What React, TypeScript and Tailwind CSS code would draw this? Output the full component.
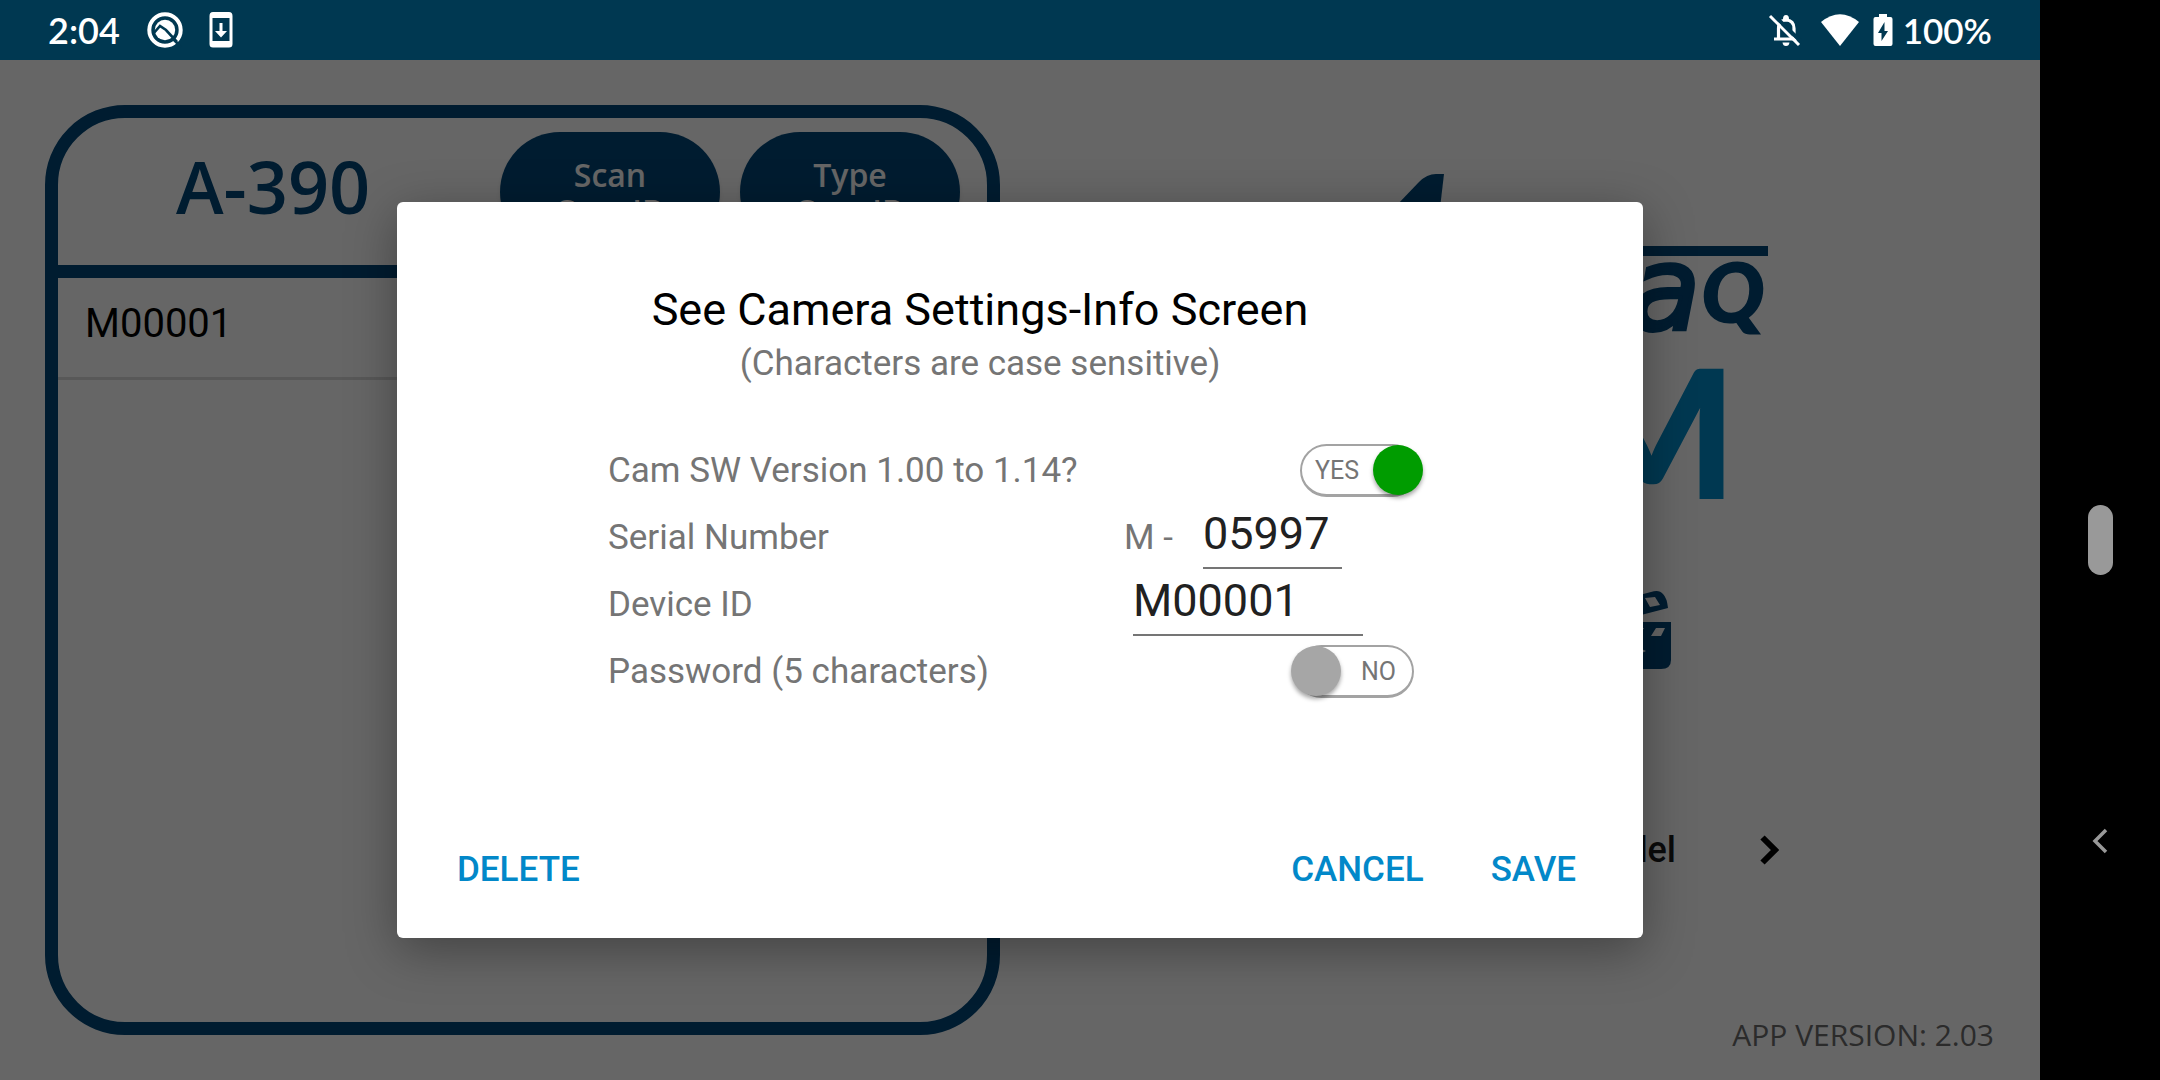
import React, { useState } from "react";

function StatusBar() {
  return (
    <header className="flex h-[60px] items-center justify-between bg-[#003851] pr-[48px] pl-[48px] text-white">
      <div className="flex items-center">
        <time className="w-[98px] font-['Lato'] text-[36px] leading-[44px] font-semibold">2:04</time>
        <svg className="h-[38px] w-[38px]" viewBox="0 0 38 38" aria-hidden="true">
          <circle cx="19" cy="19" r="15.7" fill="none" stroke="#fff" strokeWidth="4" />
          <circle cx="19" cy="19" r="10.2" fill="#fff" />
          <path d="M7 23l7-8 6 4 11 12" fill="none" stroke="#003851" strokeWidth="2.6" />
          <path d="M27 28l8 8" stroke="#003851" strokeWidth="2.5" />
        </svg>
        <svg className="ml-[25px] h-[36px] w-[24px]" viewBox="0 0 24 36" aria-hidden="true">
          <path fillRule="evenodd" fill="#fff" d="M4 0h16q3.500 0 3.500 4v28q0 3.500-3.500 3.500H4Q.5 35.500.5 32V4Q.5 0 4 0zM3.500 6v23h17V6z" />
          <path fill="#fff" d="M10.500 11h3v8h4.500l-6 6.500-6-6.500h4.500z" />
        </svg>
      </div>
      <div className="flex items-center">
        <svg className="h-[34px] w-[34px]" viewBox="0 0 34 34" aria-hidden="true">
          <path d="M10.500 26V15.500q0-8 7.500-8.500 8 .5 8 8.500V26" fill="none" stroke="#fff" strokeWidth="3.200" />
          <path d="M6 26h23" stroke="#fff" strokeWidth="3" />
          <path d="M15 6q0-4 3-4t3 4zM14.500 29.500h7q-.5 3.500-3.500 3.500t-3.500-3.500z" fill="#fff" />
          <path d="M4.500 1L34 29.500" stroke="#003851" strokeWidth="4" />
          <path d="M2 3L31 32" stroke="#fff" strokeWidth="3" />
        </svg>
        <svg className="ml-[19px] h-[32px] w-[38px]" viewBox="0 0 38 32" aria-hidden="true">
          <path fill="#fff" d="M0 8Q19-7.500 38 8L19 32z" />
        </svg>
        <svg className="ml-[14px] h-[32px] w-[20px]" viewBox="0 0 20 32" aria-hidden="true">
          <path fill="#fff" d="M6 0h8v3h3.500q2 0 2 2v25q0 2-2 2h-15q-2 0-2-2V5q0-2 2-2H6z" />
          <path fill="#003851" d="M11.500 8v9H15l-6.500 10v-8H5z" />
        </svg>
        <span className="ml-[10px] font-['Lato'] text-[35px] leading-[44px] font-semibold">100%</span>
      </div>
    </header>
  );
}

function PanelButton({ children }: { children: React.ReactNode }) {
  return (
    <button className="h-[120px] w-[220px] rounded-full bg-[#004678] pt-[2px] font-['Open_Sans'] text-[32px] leading-[36px] font-semibold text-white shadow-md">
      {children}
    </button>
  );
}

function CameraPanel() {
  return (
    <section className="flex flex-col overflow-hidden rounded-[80px] border-[13px] border-[#004678]">
      <div className="flex h-[147px] items-center pr-[27px]">
        <h1 className="flex-1 pb-[12px] pl-[118px] font-['Open_Sans'] text-[72px] leading-[80px] font-semibold text-[#004678]">A-390</h1>
        <div className="flex gap-5">
          <PanelButton>Scan<br />Cam ID</PanelButton>
          <PanelButton>Type<br />Cam ID</PanelButton>
        </div>
      </div>
      <ul className="border-t-[13px] border-[#004678]">
        <li className="flex h-[102px] items-center border-b-3 border-[#dddddd] pb-2 pl-[27px] text-[40px] leading-[48px] text-black">M00001</li>
      </ul>
    </section>
  );
}

function Brand() {
  return (
    <svg className="h-[326px] w-[496px]" viewBox="0 0 496 326" role="img" aria-label="Logo">
      <path d="M124 32L147 8Q155 0 164 0h8l-4 34z" fill="#004678" />
      <rect x="240" y="72" width="256" height="10" fill="#004678" />
      <text x="358" y="155" fontFamily="DejaVu Sans" fontStyle="oblique" fontSize="115" fill="#004678" stroke="#004678" strokeWidth="4">a</text>
      <text x="429" y="149" fontFamily="Lato" fontWeight="800" fontStyle="italic" fontSize="84" fill="#004678">Q</text>
      <text x="465" y="325" textAnchor="end" fontFamily="Lato" fontWeight="900" fontSize="180" fill="#008cca">M</text>
    </svg>
  );
}

function Clapper() {
  return (
    <svg className="h-[80px] w-[84px]" viewBox="0 0 84 80" aria-hidden="true">
      <g fill="#004678">
        <path d="M2 18L64 2q8-3 12 2 4 4 5 14L4 38z" />
        <path d="M0 32h84v38q0 9-10 9H10q-10 0-10-9z" />
      </g>
      <path d="M4 38L82 20v12H4z" fill="#fff" />
      <g fill="#fff">
        <path d="M58 8l10-1 5 8-10 2zM34 14l10-2 5 9-10 2zM69 38h9l-4 8h-10zM47 38h10l-5 8H42zM26 38h10l-5 8H21z" />
        <path d="M34 50l25 11-25 12z" />
      </g>
    </svg>
  );
}

function Home() {
  return (
    <main className="grid flex-1 grid-cols-2 bg-white">
      <div className="grid py-[45px] pr-5 pl-[45px]">
        <CameraPanel />
      </div>
      <div className="flex flex-col items-center pt-[114px] pr-5 pb-[23px]">
        <Brand />
        <div className="mt-[90px] flex w-[302px] justify-end">
          <Clapper />
        </div>
        <button className="mt-[155px] flex w-[518px] items-center justify-end gap-[84px] text-[36px] leading-[50px] font-medium text-[#1a1a1a]">
          Model
          <svg className="h-[30px] w-[19px]" viewBox="0 0 19 30" aria-hidden="true">
            <path d="M2.500 2.500L15 15 2.500 27.500" fill="none" stroke="#000" strokeWidth="6" />
          </svg>
        </button>
        <p className="mt-auto self-end pr-[26px] font-['Open_Sans'] text-[30px] leading-[44px] text-[#6b6b6b]">APP VERSION: 2.03</p>
      </div>
    </main>
  );
}

function Switch({ id, on, onChange }: { id: string; on: boolean; onChange: (v: boolean) => void }) {
  return (
    <span className={on ? "relative flex h-[53px] w-[123px] pr-[4px]" : "relative flex h-[53px] w-[123px] pl-[4px]"}>
      <input
        id={id}
        type="checkbox"
        role="switch"
        checked={on}
        onChange={(e) => onChange(e.target.checked)}
        className="h-full w-full appearance-none rounded-full border-2 border-b-3 border-[#a3a3a3] bg-white"
      />
      <span
        className={
          on
            ? "pointer-events-none absolute inset-y-0 left-0 flex items-center pl-[15px] text-[25px] leading-[30px] text-[#757575]"
            : "pointer-events-none absolute inset-y-0 right-0 flex items-center pr-[18px] text-[25px] leading-[30px] text-[#757575]"
        }
      >
        {on ? "YES" : "NO"}
      </span>
      <span
        className={
          on
            ? "pointer-events-none absolute top-px right-0 size-[50px] rounded-full bg-[#009c00] shadow-[0_3px_4px_rgba(0,0,0,0.35)]"
            : "pointer-events-none absolute top-px left-0 size-[50px] rounded-full bg-[#a6a6a6] shadow-[0_3px_4px_rgba(0,0,0,0.35)]"
        }
      />
    </span>
  );
}

function SettingsDialog() {
  const [oldVersion, setOldVersion] = useState(true);
  const [password, setPassword] = useState(false);
  const [serial, setSerial] = useState("05997");
  const [device, setDevice] = useState("M00001");
  const field =
    "h-[62px] border-b-2 border-[#757575] bg-transparent pb-[6px] text-[45px] leading-[52px] text-[#212121] outline-none";
  return (
    <form
      role="dialog"
      aria-labelledby="dialog-title"
      onSubmit={(e) => e.preventDefault()}
      className="w-[1246px] max-w-full rounded-md bg-white pt-[81px] pb-[43px] shadow-[0_12px_50px_rgba(0,0,0,0.35)]"
    >
      <div className="pr-[80px] text-center">
        <h2 id="dialog-title" className="text-[45px] leading-[53px] text-black">See Camera Settings-Info Screen</h2>
        <p className="mt-[7px] text-[35px] leading-[42px] text-[#757575]">(Characters are case sensitive)</p>
      </div>
      <div className="mt-[52px] pr-[220px] pl-[211px] text-[35px] leading-[42px] text-[#757575]">
        <div className="flex h-[67px] items-center justify-between">
          <label htmlFor="version">Cam SW Version 1.00 to 1.14?</label>
          <Switch id="version" on={oldVersion} onChange={setOldVersion} />
        </div>
        <div className="flex h-[67px] items-center justify-between pr-[81px]">
          <label htmlFor="serial">Serial Number</label>
          <span className="flex items-center gap-[30px]">
            M -
            <input id="serial" value={serial} onChange={(e) => setSerial(e.target.value)} className={field + " w-[139px]"} />
          </span>
        </div>
        <div className="flex h-[67px] items-center justify-between pr-[60px]">
          <label htmlFor="device">Device ID</label>
          <input id="device" value={device} onChange={(e) => setDevice(e.target.value)} className={field + " w-[230px]"} />
        </div>
        <div className="flex h-[67px] items-center justify-between pr-[9px]">
          <label htmlFor="password">Password (5 characters)</label>
          <Switch id="password" on={password} onChange={setPassword} />
        </div>
      </div>
      <div className="mt-[140px] flex pr-[67px] pl-[60px] text-[35px] leading-[50px] font-medium text-[#0288c9]">
        <button type="button" className="mr-auto">DELETE</button>
        <button type="button" className="mr-[67px]">CANCEL</button>
        <button type="submit">SAVE</button>
      </div>
    </form>
  );
}

export default function App() {
  return (
    <div className="flex min-h-screen font-['Roboto',sans-serif]">
      <div className="flex flex-1 flex-col">
        <StatusBar />
        <div className="relative flex flex-1">
          <Home />
          <div className="absolute inset-0 flex items-center justify-center bg-black/60">
            <SettingsDialog />
          </div>
        </div>
      </div>
      <nav className="grid w-[120px] grid-rows-3 place-items-center bg-black">
        <span />
        <button aria-label="Home" className="h-[70px] w-[25px] rounded-full bg-[#999999]" />
        <button aria-label="Back" className="self-start pt-[108px]">
          <svg className="h-[26px] w-[16px]" viewBox="0 0 16 26" aria-hidden="true">
            <path d="M14 2L3 13l11 11" fill="none" stroke="#999" strokeWidth="3.500" />
          </svg>
        </button>
      </nav>
    </div>
  );
}
